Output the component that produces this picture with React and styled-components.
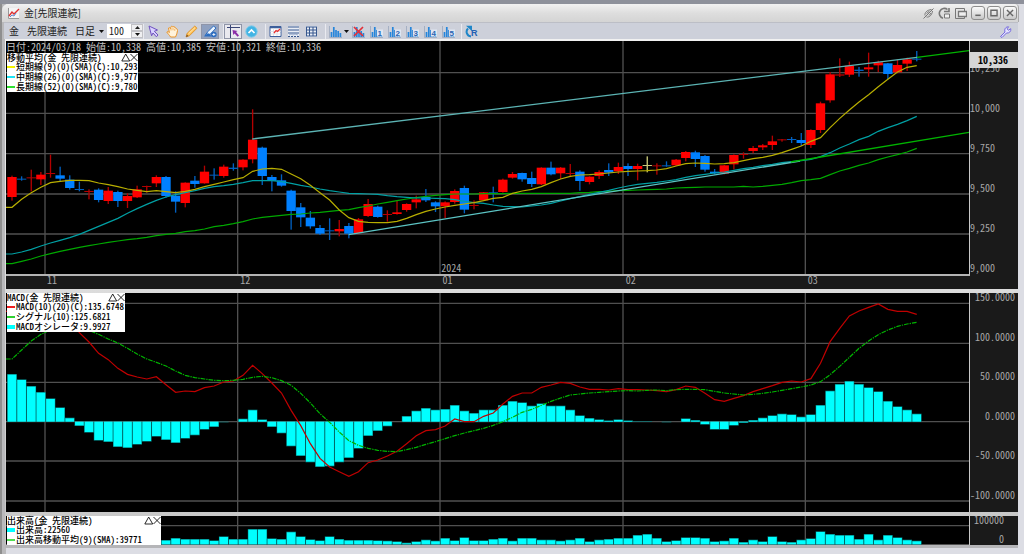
import React from "react";
import styled, { createGlobalStyle } from "styled-components";

const GlobalStyle = createGlobalStyle`
  * {
    box-sizing: border-box;
  }

  body {
    margin: 0;
    background: #dcdde4;
    font-family: "Noto Sans CJK JP", "Liberation Sans", sans-serif;
    font-size: 10px;
  }

  button, input, select {
    font: inherit;
    color: inherit;
    margin: 0;
    padding: 0;
    border: 0;
    background: none;
  }
`;

const Window = styled.main`
  display: flex;
  flex-direction: column;
  height: 100vh;
  min-height: 400px;
  border-top: 4px solid #8e919b;
  background: linear-gradient(90deg, #8f8f8f 0 2px, #b9b9bb 2px 6px, #dcdde4 6px);
`;

const TitleBar = styled.header`
  display: flex;
  align-items: center;
  height: 18px;
  flex: none;
  margin: 0 5px 0 2px;
  padding: 0 1px 0 5px;
  border-radius: 6px 4px 0 0;
  border-right: 1px solid #aaa;
  background: linear-gradient(#f2f2f2, #dedede 50%, #d4d4d4);
`;

const Title = styled.h1`
  flex: 1;
  margin: 0 0 0 4px;
  font-size: 10px;
  font-weight: 400;
  line-height: 16px;
  color: #222;
`;

const TitleButton = styled.button`
  display: flex;
  width: 16px;
  height: 14px;
  align-items: center;
  justify-content: center;
`;

const TitleTools = styled.div`
  display: flex;
  margin-right: 1px;
`;

const FrameButton = styled(TitleButton)`
  width: 14px;
  margin-left: 2px;
  border: 1px solid #8d8d8d;
  border-radius: 3px;
  background: linear-gradient(#fafafa, #c9c9c9);
`;

const Toolbar = styled.div`
  display: flex;
  align-items: center;
  height: 17px;
  flex: none;
  margin: 0 6px 0 4px;
  padding-right: 4px;
  background: #cdd0da;
  border-top: 1px solid #bcbec6;
  color: #222;
`;

const Symbol = styled.span`
  width: ${(p) => p.$width}px;
  padding-left: 5px;
  line-height: 16px;
`;

const Period = styled.label`
  display: flex;
  align-items: center;
  width: 32px;

  select {
    appearance: none;
    width: 24px;
    line-height: 16px;
  }
`;

const MenuCaret = styled.button`
  display: flex;
  align-items: center;
  width: 5px;
  flex: none;
`;

const Count = styled.div`
  display: flex;
  width: 36px;
  height: 14px;
  background: #fff;

  input {
    width: 24px;
    padding-left: 2px;
    font-feature-settings: "hwid";
    line-height: 14px;
    outline: 0;
  }
`;

const Spinner = styled.div`
  display: flex;
  flex-direction: column;
  width: 12px;

  button {
    display: flex;
    flex: 1;
    align-items: center;
    justify-content: center;
    border: 1px solid #c2c2c6;
    background: #efeff1;
  }
`;

const Group = styled.div`
  display: flex;
  width: ${(p) => p.$width}px;
  gap: ${(p) => p.$gap || 0}px;
  border-left: 1px solid #e9eaf0;
`;

const ToolButton = styled.button`
  display: flex;
  width: 18px;
  height: 15px;
  flex: none;
  align-items: center;
  justify-content: center;
  background: ${(p) => p.$bg || "none"};
  box-shadow: ${(p) => (p.$bg ? "inset 0 0 0 1px #8f95a8" : "none")};
`;

const Charts = styled.section`
  display: grid;
  flex: 1;
  min-height: 0;
  grid-template-rows: 248fr 219fr 29px;
  gap: 4px;
  margin: 0 6px 0 5px;
  padding: 2px 0 0 1px;
  border-bottom: 3px solid #b5b5b8;
  background: linear-gradient(#f1f1f1, #c6c6c6);
  font-feature-settings: "hwid";
`;

const Panel = styled.div`
  display: grid;
  grid-template-columns: 1fr 48px;
  min-height: 0;
  background: #000;
`;

const PlotColumn = styled.div`
  display: flex;
  flex-direction: column;
  min-width: 0;
  min-height: 0;
`;

const Plot = styled.div`
  position: relative;
  flex: 1;
  min-height: 0;
  border-right: 1px solid #c8c8c8;
  border-bottom: ${(p) => (p.$base ? "2px solid #b4b4b4" : "0")};

  > svg {
    display: block;
    width: 100%;
    height: 100%;
  }
`;

const Quote = styled.p`
  position: absolute;
  top: 0;
  left: 0;
  margin: 0;
  line-height: 12px;
  white-space: pre;
  color: #c4c4c4;
`;

const Year = styled.span`
  position: absolute;
  left: 45.2%;
  bottom: 0;
  line-height: 12px;
  color: #a8a8a8;
`;

const Legend = styled.div`
  position: absolute;
  top: ${(p) => p.$top}px;
  left: 1px;
  width: ${(p) => p.$width}px;
  background: #fff;
  color: #000;
  font-size: 9px;
  font-weight: 500;
  line-height: 10px;
  white-space: pre;
`;

const LegendHead = styled.div`
  display: flex;
  justify-content: space-between;
  height: 9px;
  line-height: 9px;
`;

const LegendRow = styled.div`
  display: flex;
  align-items: center;
  height: 10px;
`;

const Swatch = styled.i`
  width: 8px;
  height: ${(p) => (p.$fill ? 4 : 2)}px;
  flex: none;
  margin-right: 1px;
  background: ${(p) => p.$color};
`;

const Months = styled.div`
  display: grid;
  flex: none;
  grid-template-columns: 40fr 193fr 202fr 183fr 182fr 163fr;
  height: 13px;
  background: #1a1a1a;
  color: #a8a8a8;
  line-height: 8px;

  span {
    padding-left: 1px;
  }
`;

const Axis = styled.div`
  position: relative;
  display: flex;
  flex-direction: column;
  min-height: 0;
  padding-bottom: ${(p) => p.$bottom}px;
  padding-right: ${(p) => p.$right || 0}px;
  background: #1a1a1a;
  color: #a8a8a8;
  text-align: ${(p) => (p.$right ? "right" : "left")};
`;

const Tick = styled.div`
  display: flex;
  flex: ${(p) => (p.$height ? `0 0 ${p.$height}px` : "1 1 0")};
  min-height: 0;
  flex-direction: column;
  justify-content: flex-end;
  line-height: 10px;
`;

const Price = styled.strong`
  position: absolute;
  top: 11px;
  left: 0;
  right: 0;
  padding-right: 10px;
  background: #d6d6d6;
  color: #000;
  line-height: 16px;
  text-align: right;
`;

const Spacer = styled.div`
  flex: 1;
`;

const Footer = styled.footer`
  flex: none;
  height: 6px;
`;

const STEP = 28.875;
const xAt = (i) => 36 + STEP * i;
const monthLines = [135, 713, 1320, 1869, 2416];

// r = up, b = down, y = selected; then high, body top, body bottom, low
const candles = `r137,141,201,212 b139,146,149,152 r119,142,145,184 r126,134,148,165 r74,129,132,143
b110,136,146,156 b136,149,174,179 b155,177,180,184 r178,183,186,208 b175,179,210,217
r171,182,213,222 b182,186,213,231 r190,198,213,234 r167,178,202,204 r167,168,171,188
r136,141,160,171 b138,141,198,203 b184,197,215,248 r157,158,219,232 b138,152,162,173
r107,125,160,161 b115,134,137,149 r104,110,138,143 b100,113,117,122 r88,89,112,121
r-62,29,88,100 b50,53,138,165 b135,141,153,184 b133,151,167,170 b179,182,243,299
b219,232,262,291 b243,263,289,296 b285,294,311,315 b265,301,304,330 r270,297,304,319
b279,288,311,325 r264,268,309,311 r207,222,258,261 b227,230,261,263 r241,252,255,275
r212,247,252,254 r220,222,240,245 r197,208,217,235 b177,201,211,216 b214,217,229,246
r214,217,229,264 r178,183,216,221 b167,174,239,250 r211,225,228,238 r186,187,211,213
b170,187,190,217 r146,149,186,188 r126,132,143,146 b128,129,148,155 b125,144,162,171
r112,113,163,165 b95,113,133,136 r111,113,130,147 r102,129,132,139 b121,125,153,182
r139,140,156,163 r121,126,138,147 b100,120,128,138 r98,111,124,132 b100,108,117,138
r101,108,117,151 y79,105,108,127 r100,106,109,134 b94,106,109,110 r87,89,106,108
r63,66,84,94 b62,67,87,111 b75,78,119,125 b117,125,130,133 r105,106,131,133
r73,75,103,118 r67,72,75,86 r48,54,63,70 r42,46,52,60 r17,34,45,60
r27,28,31,35 b21,27,30,39 b9,30,39,48 r-2,0,45,54 r-85,-80,0,9
r-174,-167,-89,-82 r-215,-167,-163,-159 r-205,-193,-166,-159 b-189,-181,-177,-160 r-232,-188,-182,-160
r-208,-203,-194,-174 b-201,-200,-168,-152 r-212,-195,-173,-170 r-217,-212,-199,-177 b-237,-214,-211,-206`
  .split(/\s+/)
  .map((c) => [c[0], ...c.slice(1).split(",").map(Number)]);

const candleColors = { r: "#ff0000", b: "#0080ff", y: "#e6e68a" };
const wickColors = { r: "#b40000", b: "#0060c0", y: "#c8c878" };

const shortMa = [
  232, 208, 188, 172, 158, 154, 151, 151, 152, 159, 164, 170, 177, 181, 185, 182, 185, 188, 184, 178,
  170, 163, 156, 149, 143, 124, 117, 115, 118, 132, 146, 166, 188, 210, 240, 263, 274, 277, 278, 278,
  274, 265, 254, 244, 237, 231, 226, 222, 218, 212, 205, 202, 190, 183, 178, 170, 158, 147, 139, 135,
  134, 132, 129, 126, 124, 123, 122, 120, 116, 108, 101, 99, 100, 102, 101, 98, 92, 86, 82, 76,
  68, 58, 48, 34, 23, -7, -35, -60, -84, -106, -130, -152, -174, -188, -193,
];

const midMa = [
  372, 366, 358, 348, 339, 331, 323, 313, 301, 289, 277, 265, 250, 236, 223, 211, 201, 194, 188, 182,
  175, 170, 167, 163, 158, 152, 152, 152, 155, 160, 166, 171, 177, 182, 186, 190, 191, 192, 193, 197,
  200, 202, 204, 204, 205, 206, 209, 214, 218, 220, 225, 229, 230, 231, 228, 225, 220, 213, 206, 200,
  193, 187, 181, 174, 168, 163, 160, 157, 153, 149, 142, 137, 133, 129, 126, 121, 116, 112, 107, 103,
  98, 95, 92, 88, 80, 68, 54, 42, 29, 19, 4, -7, -17, -28, -41,
];

const longMa = [
  401, 394, 387, 378, 371, 364, 358, 352, 347, 342, 337, 333, 329, 326, 322, 317, 313, 310, 305, 302,
  297, 290, 286, 281, 275, 267, 262, 259, 256, 253, 252, 249, 247, 244, 241, 239, 233, 228, 222, 217,
  212, 207, 203, 199, 196, 194, 192, 192, 192, 191, 191, 191, 190, 190, 190, 190, 190, 190, 190, 188,
  187, 185, 184, 182, 181, 180, 179, 178, 177, 174, 173, 172, 171, 171, 171, 171, 169, 171, 169, 166,
  163, 158, 152, 149, 145, 134, 123, 115, 106, 99, 89, 81, 74, 66, 55,
];

const oscillator = [
  267, 283, 303, 321, 340, 367, 398, 423, 443, 467, 471, 486, 489, 479, 470, 455, 465, 474, 461, 451,
  434, 426, 412, 410, 401, 374, 403, 426, 445, 484, 513, 532, 546, 544, 532, 519, 491, 453, 438, 424,
  410, 393, 377, 369, 374, 372, 360, 377, 384, 374, 374, 360, 348, 352, 362, 355, 362, 362, 374, 391,
  399, 403, 406, 403, 406, 408, 408, 410, 412, 410, 400, 405, 419, 434, 434, 422, 414, 405, 398, 391,
  386, 388, 395, 388, 360, 317, 297, 288, 297, 307, 319, 348, 364, 374, 386,
];

const macd = [
  79, 75, 72, 70, 72, 82, 104, 143, 171, 205, 224, 250, 268, 276, 282, 275, 299, 322, 318, 320,
  308, 303, 291, 288, 271, 241, 266, 294, 324, 376, 422, 476, 520, 546, 560, 574, 560, 533, 525, 513,
  499, 476, 452, 437, 434, 423, 402, 410, 410, 394, 384, 357, 334, 324, 324, 307, 300, 292, 295, 306,
  313, 313, 315, 311, 314, 314, 315, 317, 320, 314, 303, 307, 325, 344, 349, 340, 332, 320, 311, 302,
  292, 288, 291, 281, 235, 170, 130, 93, 78, 67, 57, 73, 79, 79, 88,
];

const signal = [
  222, 195, 168, 148, 135, 128, 125, 128, 136, 148, 162, 174, 190, 207, 222, 232, 243, 258, 271, 278,
  282, 286, 287, 286, 283, 277, 274, 278, 287, 301, 325, 354, 386, 412, 441, 467, 481, 490, 496, 499,
  500, 494, 487, 478, 470, 461, 452, 444, 437, 430, 421, 410, 397, 382, 373, 361, 349, 339, 330, 327,
  324, 322, 320, 318, 317, 318, 316, 315, 317, 314, 313, 313, 314, 319, 324, 327, 330, 328, 325, 321,
  316, 311, 306, 300, 290, 269, 244, 217, 190, 168, 149, 135, 124, 117, 112,
];

const volume = [
  180, 178, 176, 180, 179, 177, 181, 182, 176, 175, 180, 178, 180, 177, 176, 180, 180, 174, 177, 177,
  177, 181, 169, 177, 177, 147, 147, 175, 177, 155, 169, 178, 181, 169, 177, 180, 180, 180, 181, 182,
  184, 188, 184, 179, 182, 174, 181, 172, 181, 181, 177, 174, 182, 174, 174, 179, 179, 182, 179, 174,
  184, 179, 177, 174, 174, 165, 162, 174, 184, 181, 172, 172, 174, 184, 182, 174, 186, 179, 184, 169,
  184, 186, 179, 175, 154, 162, 165, 165, 177, 162, 179, 165, 172, 179, 182,
];

// every series starts flush with the left edge of the plot
const toPoints = (ys) => `18,${ys[0]} ` + ys.map((y, i) => `${xAt(i)},${y}`).join(" ");

const Line = ({ ys, color, dash }) => (
  <polyline points={toPoints(ys)} fill="none" stroke={color} strokeWidth="3.6" strokeDasharray={dash} />
);

const Grid = ({ rows, top, bottom }) => (
  <g stroke="#505050" strokeWidth="4">
    {rows.map((y) => (
      <line key={y} x1="18" x2="2907" y1={y} y2={y} />
    ))}
    {monthLines.map((x) => (
      <line key={x} x1={x} x2={x} y1={top} y2={bottom} />
    ))}
  </g>
);

const Bars = ({ ys, base }) => (
  <g>
    {ys.map((y, i) => (
      <g key={i}>
        <rect x={xAt(i) - 14.5} y={Math.min(y, base)} width="29" height={Math.abs(base - y)} fill="#007a7a" />
        <rect
          x={xAt(i) - 13}
          y={Math.min(y, base) + (y < base ? 2 : 0)}
          width="26"
          height={Math.max(Math.abs(base - y) - 2, 0)}
          fill="#00ffff"
        />
      </g>
    ))}
  </g>
);

const PriceChart = () => (
  <svg viewBox="18 -267 2889 699" preserveAspectRatio="none" aria-hidden="true">
    <Grid rows={[-172, -50, 71, 192, 312]} top={-267} bottom={432} />
    {candles.map(([kind, high, top, bottom, low], i) => (
      <g key={i}>
        <rect x={xAt(i) - 2} y={high} width="4" height={low - high} fill={wickColors[kind]} />
        <rect
          x={xAt(i) - 14}
          y={top}
          width="28"
          height={bottom - top}
          fill={bottom - top < 5 ? wickColors[kind] : candleColors[kind]}
        />
      </g>
    ))}
    <Line ys={longMa} color="#00a800" />
    <Line ys={midMa} color="#00a0a4" />
    <Line ys={shortMa} color="#b8ae00" />
    <g fill="none" strokeWidth="4">
      <path d="M757 27 L2751 -218" stroke="#5cb4b4" />
      <path d="M2751 -218 L2907 -238" stroke="#00b400" />
      <path d="M1046 314 L2400 93" stroke="#5cc4c4" />
      <path d="M2372 96 L2907 7" stroke="#00b400" />
    </g>
  </svg>
);

const MacdChart = () => (
  <svg viewBox="18 24 2889 657" preserveAspectRatio="none" aria-hidden="true">
    <Grid rows={[55, 175, 292, 410, 528, 648]} top={24} bottom={681} />
    <Bars ys={oscillator} base={410} />
    <Line ys={macd} color="#c00000" />
    <Line ys={signal} color="#00b400" dash="14 3 4 3" />
  </svg>
);

const VolumeChart = () => (
  <svg viewBox="18 108 2889 87" preserveAspectRatio="none" aria-hidden="true">
    <Grid rows={[137, 194]} top={108} bottom={195} />
    <Bars ys={volume} base={193} />
  </svg>
);

const Icon = ({ children, size = 13 }) => (
  <svg width={size} height={size} viewBox="0 0 13 13" fill="none" aria-hidden="true">
    {children}
  </svg>
);

const Caret = () => (
  <svg width="5" height="3" viewBox="0 0 5 3" aria-hidden="true">
    <path d="M0 0h5L2.5 3z" fill="#111" />
  </svg>
);

const LogoIcon = () => (
  <Icon>
    <path d="M1 1h11v11H1z" fill="#f4f4f4" />
    <path d="M1.5 1v10.5H12" stroke="#999" />
    <path d="M2 9l3-4 2 2 5-5" stroke="#e03030" strokeWidth="1.4" />
    <path d="M3 10l2-2 2 1 2-3" stroke="#5a8ad0" />
  </Icon>
);

const CursorIcon = () => (
  <Icon>
    <path d="M2 1l8.5 4-3.2 1.3L11 10l-1.6 1.8L6 8 4.6 10.8z" fill="#d9d2ff" stroke="#6f50c0" />
  </Icon>
);

const HandIcon = () => (
  <Icon>
    <path
      d="M4.6 12C3.5 10 1.4 8.3 .8 7c.7-1 1.8-.2 2.6 .6L2.5 3c.8-1 1.5-.2 1.8 .7L5.2 1.5c.9-.7 1.5 0 1.6 .7l1-.7c1 0 1 .7 1 1.5 .9-.4 1.5 0 1.5 .9 1 0 1.3 .6 1.2 1.6L10.8 9 9.5 12z"
      fill="#fff3dc"
      stroke="#e8952c"
    />
    <path d="M5 5.5V3M7 5.3V3M8.8 5.8V4" stroke="#e8952c" strokeWidth=".7" />
  </Icon>
);

const PencilIcon = () => (
  <Icon>
    <path d="M1 12l1.2-3.8L9.8 1l2.2 2.2-7.5 7.5z" fill="#ffc257" stroke="#d98c22" strokeWidth=".8" />
    <path d="M1 12l.8-2.5L3.6 11z" fill="#77522a" />
    <path d="M3.5 8.8L10 2.6" stroke="#ffe9b5" />
  </Icon>
);

const BrushIcon = () => (
  <Icon>
    <path d="M1 10.5l3-4L9.5 1 12 3l-5.5 6z" fill="#eaf4ff" stroke="#2b6cc0" />
    <path d="M0 11.5h8L4 8z" fill="#2b6cc0" />
    <circle cx="9.8" cy="9.5" r="2.8" fill="#2b6cc0" />
    <path d="M9.8 8v3M8.3 9.5h3" stroke="#fff" strokeWidth=".8" />
  </Icon>
);

const CrossIcon = () => (
  <Icon>
    <path d="M3.5 0v13M0 2.5h13" stroke="#3a4676" />
    <path d="M5.5 5l5 1-1.5 1 3 3.5-1.4 1.3-3-3.3L6.3 10z" fill="#8a2da8" />
  </Icon>
);

const UpIcon = () => (
  <Icon>
    <circle cx="6.5" cy="6.5" r="5.7" fill="#42b4e4" stroke="#85cbe8" />
    <path d="M3.5 8l3-3 3 3" stroke="#fff" strokeWidth="1.7" />
  </Icon>
);

const CalendarIcon = () => (
  <Icon>
    <path d="M1 1.5h11v10H1z" fill="#fff" stroke="#3c5f9c" />
    <path d="M1 2.5h11" stroke="#3c5f9c" strokeWidth="1.6" />
    <path d="M1 6.5h11M1 9h11M4.5 3v8M8 3v8" stroke="#d5dae4" strokeWidth=".7" />
    <path d="M5 8l2-2.5 1.5 1L11 4" stroke="#e83030" strokeWidth="1.3" />
  </Icon>
);

const RowsIcon = () => (
  <Icon>
    <path d="M1 1h11v11H1z" fill="#e8edf5" />
    <path d="M1 2h11M1 5h11M1 8h11" stroke="#36578e" />
    <path d="M1 11.5h11" stroke="#36578e" strokeDasharray="2 1" />
    <path d="M2 10l2-1 2 1 2-1 3 1" stroke="#8096bd" strokeWidth=".7" />
  </Icon>
);

const TableIcon = () => (
  <Icon>
    <path d="M1 1h11v11H1z" fill="#e8edf5" />
    <path d="M1 2h11M1 5h11M1 8h11M1 11h11M1.5 2v9M4.5 2v9M8 2v9M11.5 2v9" stroke="#36578e" />
  </Icon>
);

const BarsIcon = ({ mark }) => (
  <Icon>
    <path d="M.5 1v11.5H13" stroke="#9aa7bd" strokeWidth=".8" />
    <path d="M2.5 12V7M4.8 12V2M7 12V5M9.2 12V6M11.4 12V8" stroke="#2685da" strokeWidth="1.7" />
    {mark === "x" && <path d="M2 2l9 9M11 2l-9 9" stroke="#e22f38" strokeWidth="1.7" />}
    {mark && mark !== "x" && (
      <>
        <path d="M7 4.5h6v7H7z" fill="#dfe6f2" />
        <text x="7.5" y="11" fontSize="8" fontWeight="700" fontFamily="Liberation Sans, sans-serif" fill="#2a67b4">
          {mark}
        </text>
      </>
    )}
  </Icon>
);

const ReloadIcon = () => (
  <Icon>
    <path d="M6 11.5A4.7 4.7 0 0 1 3 3.5" stroke="#1f86c8" strokeWidth="2" />
    <path d="M1 .8h6v5.4z" fill="#1f86c8" />
    <text x="6" y="10.5" fontSize="9" fontWeight="700" fontFamily="Liberation Sans, sans-serif" fill="#2460b4">
      R
    </text>
  </Icon>
);

const WrenchIcon = () => (
  <Icon>
    <path
      d="M1.5 11.5L6 7C5 4 7 1.5 9.6 1.8L8 3.8l1.5 1.4 2.3-1.5C12.3 6.5 10 8.5 7.5 8L3 12.5z"
      fill="#e4e2ff"
      stroke="#7468dc"
    />
  </Icon>
);

const LinkIcon = () => (
  <Icon>
    <path d="M1.5 11.5l10-10" stroke="#777" />
    <path d="M3 8.5C2.5 6 4.5 3 9.5 2.5M4.500 10C7.5 10.5 10 8 10.5 4M4.500 6.500l3-2.500M7 8.500l2-2.500" stroke="#777" />
  </Icon>
);

const CopyIcon = () => (
  <Icon>
    <path d="M9.5 2.5A5 5 0 1 0 5 11.2M6 4.5h5V1" stroke="#777" strokeWidth="1.6" />
    <path d="M6.5 7h5v4h-5z" fill="#eee" stroke="#777" />
  </Icon>
);

const DetachIcon = () => (
  <Icon>
    <path d="M1.5 1.5h9v10h-9z" stroke="#777" />
    <path d="M4.5 4.5h8v5h-8z" fill="#eee" stroke="#777" strokeWidth="1.3" />
  </Icon>
);

const LegendTools = () => (
  <svg width="17" height="9" viewBox="0 0 17 9" fill="none" stroke="#111" strokeWidth=".9" aria-hidden="true">
    <path d="M.8 8L4.7 1l4 7zM9.5 1l7 7M16.5 1l-7 7" />
  </svg>
);

const LegendBox = ({ title, top, width, rows }) => (
  <Legend $top={top} $width={width}>
    <LegendHead>
      <span>{title}</span>
      <LegendTools />
    </LegendHead>
    {rows.map((row) => (
      <LegendRow key={row.text}>
        <Swatch $color={row.color} $fill={row.fill} />
        {row.text}
      </LegendRow>
    ))}
  </Legend>
);

const ChartToolbar = () => (
  <Toolbar>
    <Symbol $width={18}>金</Symbol>
    <Symbol $width={53}>先限連続</Symbol>
    <Period>
      <select aria-label="足種" defaultValue="day">
        <option value="day">日足</option>
      </select>
      <Caret />
    </Period>
    <Count>
      <input type="text" aria-label="本数" defaultValue="100" />
      <Spinner>
        <button aria-label="増やす">
          <svg width="5" height="3" viewBox="0 0 5 3"><path d="M0 3h5L2.5 0z" fill="#222" /></svg>
        </button>
        <button aria-label="減らす"><Caret /></button>
      </Spinner>
    </Count>
    <Group $width={80} $gap={1}>
      <ToolButton aria-label="選択"><CursorIcon /></ToolButton>
      <ToolButton aria-label="移動"><HandIcon /></ToolButton>
      <ToolButton aria-label="描画"><PencilIcon /></ToolButton>
      <ToolButton aria-label="ライン" $bg="#8fa0bf"><BrushIcon /></ToolButton>
    </Group>
    <Group $width={42}>
      <ToolButton aria-label="十字カーソル" $bg="#e9e9ef"><CrossIcon /></ToolButton>
      <ToolButton aria-label="上へ"><UpIcon /></ToolButton>
    </Group>
    <Group $width={60}>
      <ToolButton aria-label="チャート設定"><CalendarIcon /></ToolButton>
      <ToolButton aria-label="横線"><RowsIcon /></ToolButton>
      <ToolButton aria-label="表"><TableIcon /></ToolButton>
    </Group>
    <Group $width={136}>
      <ToolButton aria-label="指標"><BarsIcon /></ToolButton>
      <MenuCaret aria-label="指標メニュー"><Caret /></MenuCaret>
      {["x", "1", "2", "3", "4", "5"].map((mark) => (
        <ToolButton key={mark} aria-label={`指標 ${mark}`}><BarsIcon mark={mark} /></ToolButton>
      ))}
    </Group>
    <Group $width={20}>
      <ToolButton aria-label="更新"><ReloadIcon /></ToolButton>
    </Group>
    <Spacer />
    <ToolButton aria-label="設定"><WrenchIcon /></ToolButton>
  </Toolbar>
);

const App = () => {
  return (
    <>
      <GlobalStyle />
      <Window>
        <TitleBar>
          <LogoIcon />
          <Title>金[先限連続]</Title>
          <TitleTools>
            <TitleButton aria-label="リンク"><LinkIcon /></TitleButton>
            <TitleButton aria-label="複製"><CopyIcon /></TitleButton>
            <TitleButton aria-label="切り離し"><DetachIcon /></TitleButton>
          </TitleTools>
          <FrameButton aria-label="最小化">
            <Icon size={10}><path d="M3 9.5h7" stroke="#666" strokeWidth="2" /></Icon>
          </FrameButton>
          <FrameButton aria-label="最大化">
            <Icon size={10}><path d="M2.5 3h8v7h-8z" stroke="#666" strokeWidth="1.8" /></Icon>
          </FrameButton>
          <FrameButton aria-label="閉じる">
            <Icon size={10}><path d="M2.5 2.5l8 8M10.5 2.5l-8 8" stroke="#666" strokeWidth="1.8" /></Icon>
          </FrameButton>
        </TitleBar>
        <ChartToolbar />
        <Charts>
          <Panel>
            <PlotColumn>
              <Plot $base>
                <PriceChart />
                <Quote>日付:2024/03/18 始値:10,338 高値:10,385 安値:10,321 終値:10,336</Quote>
                <LegendBox
                  title="移動平均(金 先限連続)"
                  top={12}
                  width={131}
                  rows={[
                    { text: "短期線(9)(0)(SMA)(C):10,293", color: "#f4f400" },
                    { text: "中期線(26)(0)(SMA)(C):9,977", color: "#20e4f4" },
                    { text: "長期線(52)(0)(SMA)(C):9,780", color: "#30e030" },
                  ]}
                />
                <Year>2024</Year>
              </Plot>
              <Months>
                <span />
                <span>11</span>
                <span>12</span>
                <span>01</span>
                <span>02</span>
                <span>03</span>
              </Months>
            </PlotColumn>
            <Axis $bottom={16}>
              <Tick $height={32}>10,250</Tick>
              <Tick>10,000</Tick>
              <Tick>9,750</Tick>
              <Tick>9,500</Tick>
              <Tick>9,250</Tick>
              <Tick>9,000</Tick>
              <Price>10,336</Price>
            </Axis>
          </Panel>
          <Panel>
            <Plot>
              <MacdChart />
              <LegendBox
                title="MACD(金 先限連続)"
                top={0}
                width={118}
                rows={[
                  { text: "MACD(10)(20)(C):135.6748", color: "#f02020" },
                  { text: "シグナル(10):125.6821", color: "#30d030" },
                  { text: "MACDオシレータ:9.9927", color: "#00ffff", fill: true },
                ]}
              />
            </Plot>
            <Axis $bottom={12} $right={3}>
              <Tick $height={9}>150.0000</Tick>
              <Tick>100.0000</Tick>
              <Tick>50.0000</Tick>
              <Tick>0.0000</Tick>
              <Tick>-50.0000</Tick>
              <Tick>-100.0000</Tick>
            </Axis>
          </Panel>
          <Panel>
            <Plot>
              <VolumeChart />
              <LegendBox
                title="出来高(金 先限連続)"
                top={0}
                width={154}
                rows={[
                  { text: "出来高:22560", color: "#00ffff", fill: true },
                  { text: "出来高移動平均(9)(SMA):39771", color: "#50e050" },
                ]}
              />
            </Plot>
            <Axis $bottom={1} $right={14}>
              <Tick $height={9}>100000</Tick>
              <Tick>0</Tick>
            </Axis>
          </Panel>
        </Charts>
        <Footer />
      </Window>
    </>
  );
};

export default App;
